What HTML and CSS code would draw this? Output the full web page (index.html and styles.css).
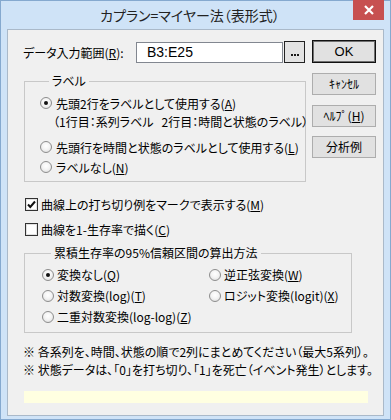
FILE: index.html
```html
<!DOCTYPE html>
<html lang="ja">
<head>
<meta charset="utf-8">
<title>カプラン=マイヤー法（表形式）</title>
<link rel="stylesheet" href="styles.css">
</head>
<body>
<div class="window">
  <div class="titlebar">
    <div class="title">カプラン=マイヤー法（表形式）</div>
    <div class="close"><svg width="12" height="10" viewBox="0 0 12 10"><path d="M2 1 L10 9 M10 1 L2 9" stroke="#fff" stroke-width="2.2" fill="none"/></svg></div>
  </div>
  <div class="client">
    <div class="top">
      <div class="left">
        <div class="range-row">
          <span class="range-label">データ入力範囲(<u>R</u>):</span>
          <div class="input">B3:E25</div>
          <div class="dots"><span class="dot"></span><span class="dot"></span><span class="dot"></span></div>
        </div>
        <fieldset class="group g1">
          <legend>ラベル</legend>
          <div class="opt"><span class="radio on"></span><span>先頭2行をラベルとして使用する(<u>A</u>)</span></div>
          <div class="sub">（1行目：系列ラベル&nbsp;&nbsp;&nbsp;2行目：時間と状態のラベル）</div>
          <div class="opt gap"><span class="radio"></span><span>先頭行を時間と状態のラベルとして使用する(<u>L</u>)</span></div>
          <div class="opt"><span class="radio"></span><span>ラベルなし(<u>N</u>)</span></div>
        </fieldset>
      </div>
      <div class="buttons">
        <div class="btn default">OK</div>
        <div class="btn">ｷｬﾝｾﾙ</div>
        <div class="btn">ﾍﾙﾌﾟ(<u>H</u>)</div>
        <div class="btn last">分析例</div>
      </div>
    </div>
    <div class="check first"><span class="box"><svg width="11" height="11" viewBox="0 0 11 11"><path d="M2 5.5 L4.3 8 L9 2.5" stroke="#111" stroke-width="2" fill="none"/></svg></span><span>曲線上の打ち切り例をマークで表示する(<u>M</u>)</span></div>
    <div class="check"><span class="box"></span><span>曲線を1-生存率で描く(<u>C</u>)</span></div>
    <fieldset class="group g2">
      <legend>累積生存率の95%信頼区間の算出方法</legend>
      <div class="grid">
        <div class="opt2"><span class="radio on"></span><span>変換なし(<u>Q</u>)</span></div>
        <div class="opt2"><span class="radio"></span><span>逆正弦変換(<u>W</u>)</span></div>
        <div class="opt2"><span class="radio"></span><span>対数変換(log)(<u>T</u>)</span></div>
        <div class="opt2"><span class="radio"></span><span>ロジット変換(logit)(<u>X</u>)</span></div>
        <div class="opt2"><span class="radio"></span><span>二重対数変換(log-log)(<u>Z</u>)</span></div>
      </div>
    </fieldset>
    <div class="notes">
      <div class="note">※&nbsp;各系列を、時間、状態の順で2列にまとめてください（最大5系列）。</div>
      <div class="note">※&nbsp;状態データは、「0」を打ち切り、「1」を死亡（イベント発生）とします。</div>
    </div>
    <div class="status"></div>
  </div>
</div>
</body>
</html>
```
FILE: styles.css
```css
* { box-sizing: border-box; }
html, body { margin: 0; padding: 0; }
body {
  width: 391px;
  height: 420px;
  overflow: hidden;
  font-family: "Noto Sans CJK JP", "Noto Sans", sans-serif;
  font-size: 12px;
  color: #000;
  font-feature-settings: "palt";
}
u { text-decoration: underline; text-underline-offset: 1px; }

.window {
  width: 391px;
  height: 420px;
  background: #cfe3f7;
  border: 1px solid #85a9cf;
  display: flex;
  flex-direction: column;
}
.titlebar {
  height: 28px;
  display: flex;
  align-items: flex-start;
  flex: none;
}
.title {
  flex: 1;
  padding-left: 26px;
  text-align: center;
  font-size: 14px;
  line-height: 28px;
  color: #222;
}
.close {
  width: 31px;
  height: 20px;
  margin-top: -1px;
  margin-right: 6px;
  background: #c75050;
  display: flex;
  align-items: center;
  justify-content: center;
}
.client {
  flex: 1;
  margin: 0 6px 3px 6px;
  border: 1px solid #aab9c9;
  background: #f0f0f0;
  padding: 10px 0 0 15px;
}
.top { display: flex; }
.left { width: 282px; }
.range-row {
  margin-top: 2px;
  height: 21px;
  display: flex;
  align-items: center;
}
.range-label { width: 113px; line-height: 21px; }
.input {
  width: 147px;
  height: 21px;
  border: 1px solid #828790;
  background: #fff;
  font-family: "Liberation Sans", sans-serif;
  font-size: 14px;
  line-height: 19px;
  padding-left: 10px;
}
.dots {
  width: 21px;
  height: 22px;
  margin-top: -1px;
  margin-left: 1px;
  border: 1px solid #222;
  background: #e3e3e3;
  display: flex;
  align-items: flex-end;
  justify-content: center;
  gap: 1px;
  padding-bottom: 6px;
}
.dot {
  width: 2px;
  height: 2px;
  background: #1a1a1a;
}

.group {
  margin: 0;
  border: 1px solid #c8c8c8;
  padding: 0;
  min-width: 0;
}
.group legend {
  padding: 0 3px;
  margin-left: 9px;
  line-height: 16px;
  height: 16px;
}
.g1 {
  margin-top: 10px;
  margin-left: 1px;
  width: 282px;
  padding: 4px 0 4px 15px;
}
.opt {
  height: 20px;
  display: flex;
  align-items: center;
}
.opt.gap { margin-top: 6px; }
.sub {
  height: 18px;
  line-height: 18px;
  padding-left: 13px;
  white-space: nowrap;
}
.radio {
  width: 12px;
  height: 12px;
  border-radius: 50%;
  border: 1px solid #8d8d8d;
  background: radial-gradient(circle at 50% 40%, #ffffff 0%, #f4f4f4 45%, #d8d8d8 100%);
  margin-right: 4px;
  flex: none;
  display: flex;
  align-items: center;
  justify-content: center;
}
.radio.on::after {
  content: "";
  width: 4px;
  height: 4px;
  border-radius: 50%;
  background: #111;
}

.buttons {
  margin-left: 7px;
  width: 64px;
  display: flex;
  flex-direction: column;
}
.btn {
  height: 22px;
  margin-top: 10px;
  border: 1px solid #adadad;
  background: #e1e1e1;
  text-align: center;
  line-height: 20px;
}
.btn.default {
  margin-top: 0;
  height: 23px;
  border: 1px solid #111;
  box-shadow: inset 0 0 0 1px #707070;
  font-family: "Liberation Sans", sans-serif;
  font-size: 13px;
  line-height: 21px;
}
.btn.last { margin-top: 9px; }

.check {
  height: 20px;
  display: flex;
  align-items: center;
  margin-top: 5px;
}
.check.first { margin-top: 12px; }
.box {
  width: 13px;
  height: 13px;
  margin-left: 2px;
  margin-right: 3px;
  border: 1px solid #333;
  background: #fff;
  box-shadow: inset 0 0 0 1px #e2e2e2;
  display: flex;
  align-items: center;
  justify-content: center;
  flex: none;
}

.g2 {
  margin-top: 6px;
  margin-left: 1px;
  width: 328px;
  padding: 3px 0 5px 17px;
}
.grid {
  display: grid;
  grid-template-columns: 167px 1fr;
  grid-auto-rows: 21px;
}
.opt2 {
  display: flex;
  align-items: center;
}
.opt2 .radio { margin-right: 3px; }

.notes { margin-top: 10px; }
.note {
  height: 18px;
  line-height: 18px;
  white-space: nowrap;
}
.status {
  margin-top: 12px;
  margin-left: 1px;
  width: 344px;
  height: 12px;
  background: #ffffe1;
}
```
